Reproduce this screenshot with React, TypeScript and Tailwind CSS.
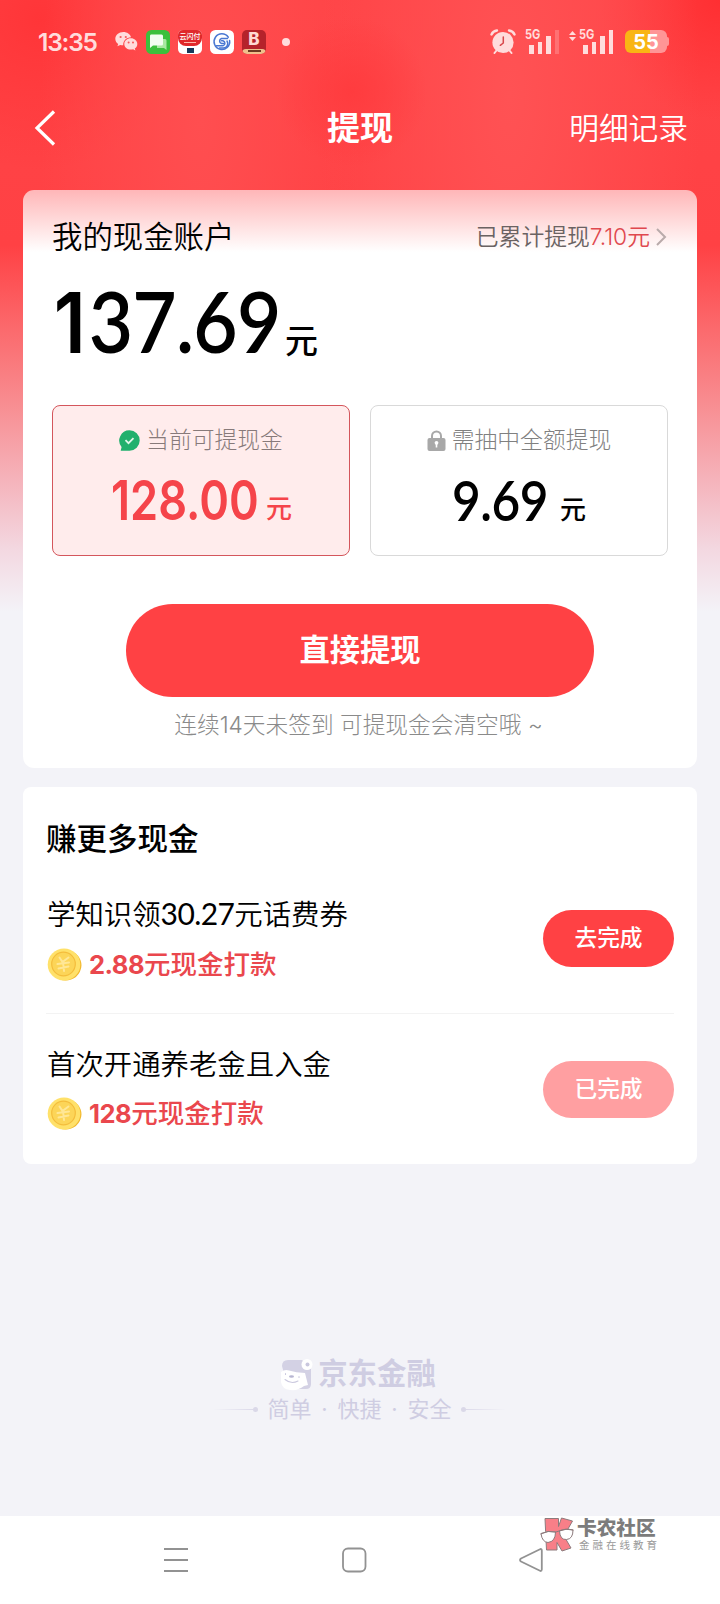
import { ReactNode } from 'react';
import { clsx } from 'clsx';

type Task = {
  id: string;
  title: ReactNode;
  amount: string;
  done: boolean;
};

const TASKS: Task[] = [
  {
    id: 'learn',
    title: (
      <>
        学知识领<span className="font-['Lato'] text-[30px] font-normal tracking-[-0.600px]">30.27</span>元话费券
      </>
    ),
    amount: '2.88',
    done: false,
  },
  { id: 'pension', title: '首次开通养老金且入金', amount: '128', done: true },
];

function WeChatIcon() {
  return (
    <svg className="h-[19px] w-[23px]" viewBox="0 0 23 19" fill="#ffdcdc">
      <path d="M8.3 0C3.8 0 .3 3 .3 6.800c0 2.200 1.100 4 2.900 5.200l-.8 2.300 2.800-1.400c1 .3 2 .4 3 .4C8 8.600 11.500 5.300 16 5.200 15.200 2.200 12.100 0 8.300 0z" />
      <path d="M22.300 11.900c0-3.200-2.900-5.700-6.500-5.700s-6.500 2.500-6.500 5.700 2.900 5.700 6.500 5.700c.8 0 1.600-.1 2.300-.3l2.300 1.300-.6-2c1.500-1.100 2.500-2.800 2.500-4.700z" />
      <g fill="#f8575a">
        <circle cx="5.600" cy="5" r="1.100" />
        <circle cx="10.800" cy="5" r="1.100" />
        <circle cx="13.600" cy="10.600" r="1" />
        <circle cx="18" cy="10.600" r="1" />
      </g>
    </svg>
  );
}

function MessagesIcon() {
  return (
    <svg className="size-6" viewBox="0 0 24 24">
      <rect width="24" height="24" rx="5.500" fill="#3cc03c" />
      <path d="M11 9h8a1.500 1.500 0 0 1 1.500 1.500V20l-2.500-2h-7z" fill="#a9e8a2" />
      <path d="M5 4.500h10.500A1.500 1.500 0 0 1 17 6v8a1.500 1.500 0 0 1-1.500 1.500H7L4 18V6a1.500 1.500 0 0 1 1-1.500z" fill="#f3fdf1" />
    </svg>
  );
}

function UnionPayIcon() {
  return (
    <span className="flex size-6 flex-col items-center overflow-hidden rounded-[5px] bg-white">
      <span className="flex h-4 w-full flex-col items-center rounded-b-[8px] bg-[#e0282b] pt-[3px]">
        <span className="text-[7px] leading-[8px] font-medium whitespace-nowrap text-white">云闪付</span>
        <span className="mt-px h-px w-3 bg-[#ffb9ab]" />
      </span>
      <span className="mt-[2px] h-[5px] w-[7px] bg-[#16385a]" />
    </span>
  );
}

function SwirlIcon() {
  return (
    <svg className="size-6" viewBox="0 0 24 24">
      <rect width="24" height="24" rx="5.500" fill="#fff" />
      <g fill="none" stroke="#4a78d2" strokeWidth="1.500" strokeLinecap="round">
        <path d="M18.300 7.200A7.800 7.800 0 1 0 19.600 10.500" />
        <path d="M17.500 8.500H11.500a2.600 2.600 0 0 0 0 5h2" />
        <path d="M6.500 15.800h6.500a2.600 2.600 0 0 0 0-5h-1.500" />
        <path d="M9.500 18h4a4.500 4.500 0 0 0 3.500-7" />
      </g>
    </svg>
  );
}

function BillIcon() {
  return (
    <span className="flex size-6 flex-col items-center overflow-hidden rounded-[5px] bg-[#b5232b]">
      <span className="h-[19px] text-[17px] leading-[19px] font-extrabold text-[#ffd9d4]">B</span>
      <span className="flex h-[5px] w-full items-center justify-center rounded-t-[4px] bg-[#f0c08c]">
        <span className="h-[2px] w-[13px] bg-[#6d3a22]" />
      </span>
    </span>
  );
}

function AlarmIcon() {
  return (
    <svg className="h-[25px] w-[26px]" viewBox="0 0 26 25">
      <circle cx="13" cy="13.500" r="10.600" fill="#ffdcdc" />
      <g fill="none" stroke="#ffdcdc" strokeLinecap="round">
        <path d="M1.500 5.500Q3 2 7 1.500M24.500 5.500Q23 2 19 1.500" strokeWidth="2.400" />
        <path d="M6.500 21.500 4.500 24M19.500 21.500l2 2.500" strokeWidth="2" />
      </g>
      <path d="M13.300 8v6l-3 2.300" fill="none" stroke="#d8474b" strokeWidth="1.500" strokeLinecap="round" />
    </svg>
  );
}

const BARS = ['h-[9px]', 'h-[12px]', 'h-[18px]', 'h-[24px]'];

function Signal({ strength }: { strength: number }) {
  return (
    <div className="relative flex h-[25px] items-end gap-[4px] pl-1">
      {BARS.map((height, i) => (
        <span
          key={height}
          className={clsx('w-[4.500px]', height, i < strength ? 'bg-[#ffdcdc]' : 'bg-[#ff7173]')}
        />
      ))}
      <span className="absolute top-0 left-0 origin-left scale-x-[0.850] text-[13px] leading-[11px] font-bold text-[#ffdcdc]">
        5G
      </span>
    </div>
  );
}

function StatusBar() {
  return (
    <div className="flex h-[83px] items-center pl-[38px]">
      <span className="w-[77px] text-[24.500px] leading-6 font-semibold tracking-[-1.200px] text-[#ffdcdc]">
        13:35
      </span>
      <div className="flex items-center gap-2">
        <WeChatIcon />
        <MessagesIcon />
        <UnionPayIcon />
        <SwirlIcon />
        <BillIcon />
      </div>
      <span className="ml-4 size-2 rounded-full bg-[#ffdcdc]" />
      <div className="ml-[200px] flex items-center">
        <AlarmIcon />
        <div className="ml-[9px]">
          <Signal strength={3} />
        </div>
        <svg className="mb-3 ml-[10px] h-[10px] w-[7px]" viewBox="0 0 7 10" fill="#ffdcdc">
          <path d="M3.500 0 7 4H0zM3.500 10 0 6h7z" />
        </svg>
        <div className="ml-[3px]">
          <Signal strength={4} />
        </div>
        <div className="ml-[12px] flex h-[23px] w-[42px] items-center justify-center rounded-[6px] bg-linear-to-r from-[#f9b514] from-60% to-[#ff9596] to-60% text-[20px] leading-5 font-bold text-white">
          55
        </div>
        <span className="h-[9px] w-[2px] rounded-r bg-[#ff9596]" />
      </div>
    </div>
  );
}

function TitleBar() {
  return (
    <div className="grid h-[90px] grid-cols-[1fr_auto_1fr] items-center pr-[32px] pl-[34px]">
      <svg className="h-9 w-[22px]" viewBox="0 0 22 36" fill="none" stroke="#fff" strokeWidth="3.200">
        <path d="M20 1.500 3 18l17 16.500" />
      </svg>
      <h1 className="-ml-[2px] text-[33px] leading-9 font-bold text-white">提现</h1>
      <span className="justify-self-end text-[29.700px] leading-9 font-[350] text-white">明细记录</span>
    </div>
  );
}

function CheckBubble() {
  return (
    <svg className="size-[21px]" viewBox="0 0 21 21">
      <path d="M10.500.3A10.200 10.200 0 1 1 10.500 20.700H1.700L2.600 17A10.200 10.200 0 0 1 10.500.3z" fill="#21b06d" />
      <path d="m6.500 10.200 3 3 5-5" fill="none" stroke="#dff6ea" strokeWidth="1.800" />
    </svg>
  );
}

function LockIcon() {
  return (
    <svg className="h-[21px] w-[19px]" viewBox="0 0 19 21">
      <path d="M5 10V6a4.500 4.500 0 0 1 9 0v4" fill="none" stroke="#a8a8a8" strokeWidth="2" />
      <rect x="0.500" y="8" width="18" height="13" rx="2" fill="#a8a8a8" />
      <circle cx="9.500" cy="12.800" r="1.900" fill="#fff" />
      <path d="M8.700 13h1.600v4.500H8.700z" fill="#fff" />
    </svg>
  );
}

function BalanceBox({
  icon,
  label,
  amount,
  active,
}: {
  icon: ReactNode;
  label: string;
  amount: string;
  active?: boolean;
}) {
  return (
    <div
      className={clsx(
        'flex h-[151px] w-[298px] flex-col items-center rounded-[8px] border pt-[20px]',
        active ? 'border-[#d4565c] bg-[#ffecec]' : 'border-[#d9d9d9] bg-white',
      )}
    >
      <div
        className={clsx(
          'flex h-7 items-center gap-[6px] text-[22.800px] leading-7 font-light whitespace-nowrap',
          active ? 'text-[#877a7a]' : 'text-[#808080]',
        )}
      >
        {icon}
        {label}
      </div>
      <div
        className={clsx('mt-[14px] flex h-[60px] items-baseline', active ? 'text-[#f5444a]' : 'text-black')}
      >
        {active ? (
          <span className="-mr-[17px] ml-px w-[172px] origin-left translate-y-[2px] scale-x-[0.820] text-[55px] leading-[60px] font-semibold">
            {amount}
          </span>
        ) : (
          <span className="-mr-[6px] w-[114px] origin-left translate-y-[2px] scale-x-[0.900] font-['Lato'] text-[55px] leading-[60px] font-semibold tracking-[-0.500px]">
            {amount}
          </span>
        )}
        <span className="text-[26px] leading-8 font-medium">元</span>
      </div>
    </div>
  );
}

function AccountCard() {
  return (
    <section className="flex h-[578px] flex-col rounded-[11px] bg-white bg-linear-to-b from-[#ffb6b8] to-white to-[62px] px-[29px] pt-[29px]">
      <div className="flex h-9 items-center">
        <h2 className="text-[30.400px] leading-9 font-[350] whitespace-nowrap text-black">我的现金账户</h2>
        <span className="ml-auto text-[22.800px] leading-9 font-[350] whitespace-nowrap text-[#6a6262]">
          已累计提现<span className="text-[#e0484e]">7.10元</span>
        </span>
        <svg className="mr-px ml-[6px] h-[18px] w-[11px]" viewBox="0 0 11 18" fill="none" stroke="#b9aaaa" strokeWidth="2">
          <path d="m1 1 8 8-8 8" />
        </svg>
      </div>
      <div className="mt-[13px] flex h-[104px] items-baseline text-black">
        <span className="flex w-[233px] origin-left scale-x-[0.900] items-baseline font-['Lato'] text-[85px] leading-[104px] font-semibold tracking-[-0.800px] whitespace-nowrap">
          <span className="mr-[4px] ml-[2px] font-['Inter'] text-[84px] leading-[104px]">1</span>
          37.69
        </span>
        <span className="text-[33px] leading-9 font-medium">元</span>
      </div>
      <div className="mt-[33px] flex gap-5">
        <BalanceBox icon={<CheckBubble />} label="当前可提现金" amount="128.00" active />
        <BalanceBox icon={<LockIcon />} label="需抽中全额提现" amount="9.69" />
      </div>
      <button className="mt-12 h-[93px] w-[468px] self-center rounded-full bg-[#ff4144] text-[30.300px] font-bold text-white">
        直接提现
      </button>
      <p className="mt-3 -ml-[3px] self-center text-[22.700px] leading-8 font-light whitespace-nowrap text-[#8a8a8a]">
        连续14天未签到 可提现金会清空哦 ~
      </p>
    </section>
  );
}

function CoinIcon() {
  return (
    <svg className="size-[35px]" viewBox="0 0 35 35">
      <ellipse cx="19" cy="18.500" rx="15.500" ry="15" fill="#f2b92f" transform="rotate(-20 19 18.500)" />
      <ellipse cx="17" cy="17.500" rx="16.300" ry="16" fill="#ffe16a" />
      <circle cx="16.500" cy="17" r="11.800" fill="#fcd558" stroke="#f4bd3c" strokeWidth="1.200" />
      <path
        d="m12.500 10.500 3 4.500 6-4.500M10.500 17l11.500-1.500M11.500 21.500l10-2M16 15l1 9"
        fill="none"
        stroke="#ffe796"
        strokeWidth="2"
        strokeLinecap="round"
      />
    </svg>
  );
}

function TaskRow({ task }: { task: Task }) {
  return (
    <div className="flex h-[150px] items-center justify-between">
      <div className="pl-px">
        <div className="text-[28.400px] leading-10 font-[350] whitespace-nowrap text-black">{task.title}</div>
        <div className="mt-[9px] flex h-10 items-center">
          <CoinIcon />
          <span className="ml-[7px] text-[26.500px] leading-10 font-medium whitespace-nowrap text-[#ea474d]">
            <span className="text-[25.500px] font-bold tracking-[-0.500px]">{task.amount}</span>元现金打款
          </span>
        </div>
      </div>
      <button
        className={clsx(
          'h-[57px] w-[131px] rounded-full text-[22.700px] font-medium text-white',
          task.done ? 'bg-[#ff9fa1]' : 'bg-[#ff4144]',
        )}
      >
        {task.done ? '已完成' : '去完成'}
      </button>
    </div>
  );
}

function TaskCard() {
  return (
    <section className="mt-[19px] h-[377px] rounded-[8px] bg-white px-[23px] pt-[32px]">
      <h2 className="text-[30.500px] leading-10 font-medium text-black">赚更多现金</h2>
      <div className="mt-[5px] divide-y divide-[#f3f3f3]">
        {TASKS.map((task) => (
          <TaskRow key={task.id} task={task} />
        ))}
      </div>
    </section>
  );
}

function BrandFooter() {
  return (
    <footer className="mt-[190px] flex flex-col items-center text-[#cfcde2]">
      <div className="flex h-10 items-center gap-[5px] pr-[4px]">
        <svg className="h-[33px] w-[33px]" viewBox="0 0 33 33">
          <path d="M2 8Q2 2 8 2h14l9 9v15q0 5-5 5H8z" fill="#d3d1e4" />
          <path d="M1 14q4-3 8-1.500 7 2 16 2.500l3 12-4 1q-6 5-14 4-8-1-9-8z" fill="#fff" />
          <circle cx="27" cy="6.500" r="5.500" fill="#fff" />
          <circle cx="27.500" cy="6.500" r="2" fill="#c9c7de" />
          <g fill="none" stroke="#cbc9df" strokeWidth="1.100" strokeLinecap="round">
            <path d="M5 21.500q6 5 13 1.500" />
            <path d="M5.500 15.500v1M19 18.500v1" />
          </g>
          <ellipse cx="11.500" cy="18.500" rx="2.500" ry="1.300" fill="#b8b6d2" />
        </svg>
        <span className="text-[29.400px] leading-10 font-bold">京东金融</span>
      </div>
      <div className="flex h-[30px] items-center pr-px text-[22px] leading-[30px]">
        <span className="h-px w-[40px] bg-linear-to-r from-transparent to-[#dcdaea]" />
        <span className="mr-[9px] size-[5px] rounded-full bg-[#dad8e8]" />
        <span className="flex items-center whitespace-nowrap">
          简单<span className="w-[26px] text-center">·</span>快捷
          <span className="w-[26px] text-center">·</span>安全
        </span>
        <span className="ml-[9px] size-[5px] rounded-full bg-[#dad8e8]" />
        <span className="h-px w-[40px] bg-linear-to-l from-transparent to-[#dcdaea]" />
      </div>
    </footer>
  );
}

function Watermark() {
  return (
    <div className="absolute top-px left-[540px] flex gap-[3px]">
      <svg className="h-[35px] w-[34px]" viewBox="0 0 34 35" stroke="#8d7b7d" strokeWidth="1">
        <path d="M5 1.500h13.500v8L21.500 1l11 3L24 19l7 12-9 3-5-8.500V33H6.500z" fill="#f87f88" />
        <path
          d="M1 16.500Q8 13 15.500 15q0 9.500-7.500 10.500Q2 25 1 16.500zM19.500 14Q26 11 33 13q0 9-6.500 9.500T19.500 14z"
          fill="#fff"
        />
        <path d="M.5 17Q8 13 16 15l3-1q6-3 14.500-1" fill="none" />
      </svg>
      <div className="flex flex-col">
        <span className="h-[22px] text-[19.700px] leading-[22px] font-black text-[#7c7c7c]">卡农社区</span>
        <span className="ml-[2px] text-[10.500px] leading-[13px] tracking-[3px] whitespace-nowrap text-[#999]">
          金融在线教育
        </span>
      </div>
    </div>
  );
}

function SystemNav() {
  return (
    <nav className="relative flex h-[88px] items-center bg-white pl-[163px]">
      <svg className="h-[26px] w-[26px]" viewBox="0 0 26 26" stroke="#929292" strokeWidth="1.800">
        <path d="M1 2h24M1 13h24M1 24h24" />
      </svg>
      <svg className="ml-[152px] size-[26px]" viewBox="0 0 26 26" fill="none" stroke="#929292" strokeWidth="1.800">
        <rect x="2" y="1.500" width="22.500" height="23" rx="5" />
      </svg>
      <svg
        className="ml-[151px] size-[26px]"
        viewBox="0 0 26 26"
        fill="none"
        stroke="#929292"
        strokeWidth="1.800"
        strokeLinejoin="round"
      >
        <path d="M22.500 2 3 11.500Q1 13 3 14.500L22.500 24q1.300 0 1.300-1.500v-19Q23.800 2 22.500 2z" />
      </svg>
      <Watermark />
    </nav>
  );
}

export default function App() {
  return (
    <div className="flex h-[1604px] w-[720px] flex-col overflow-hidden bg-[#f3f3f8] font-['Inter','Noto_Sans_CJK_SC',sans-serif]">
      <div className="flex-1 bg-[radial-gradient(circle_at_352px_92px,#ff3a3ddd_0,#ff3a3d00_75px),radial-gradient(ellipse_at_510px_95px,#ff5254_0,#ff525400_190px),radial-gradient(ellipse_at_200px_120px,#ff4e50_0,#ff4e5000_160px),radial-gradient(circle_at_720px_0,#ff2f32_0,#ff2f3200_120px),radial-gradient(circle_at_40px_20px,#ff3538_0,#ff353800_150px),linear-gradient(#ff4447_0,#ff4144_245px,#fb6a6d_330px,#f88b8f_400px,#f5b3bb_480px,#f3d8e1_550px,#f3f3f8_612px)]">
        <StatusBar />
        <TitleBar />
        <main className="px-[23px] pt-[17px]">
          <AccountCard />
          <TaskCard />
        </main>
        <BrandFooter />
      </div>
      <SystemNav />
    </div>
  );
}
